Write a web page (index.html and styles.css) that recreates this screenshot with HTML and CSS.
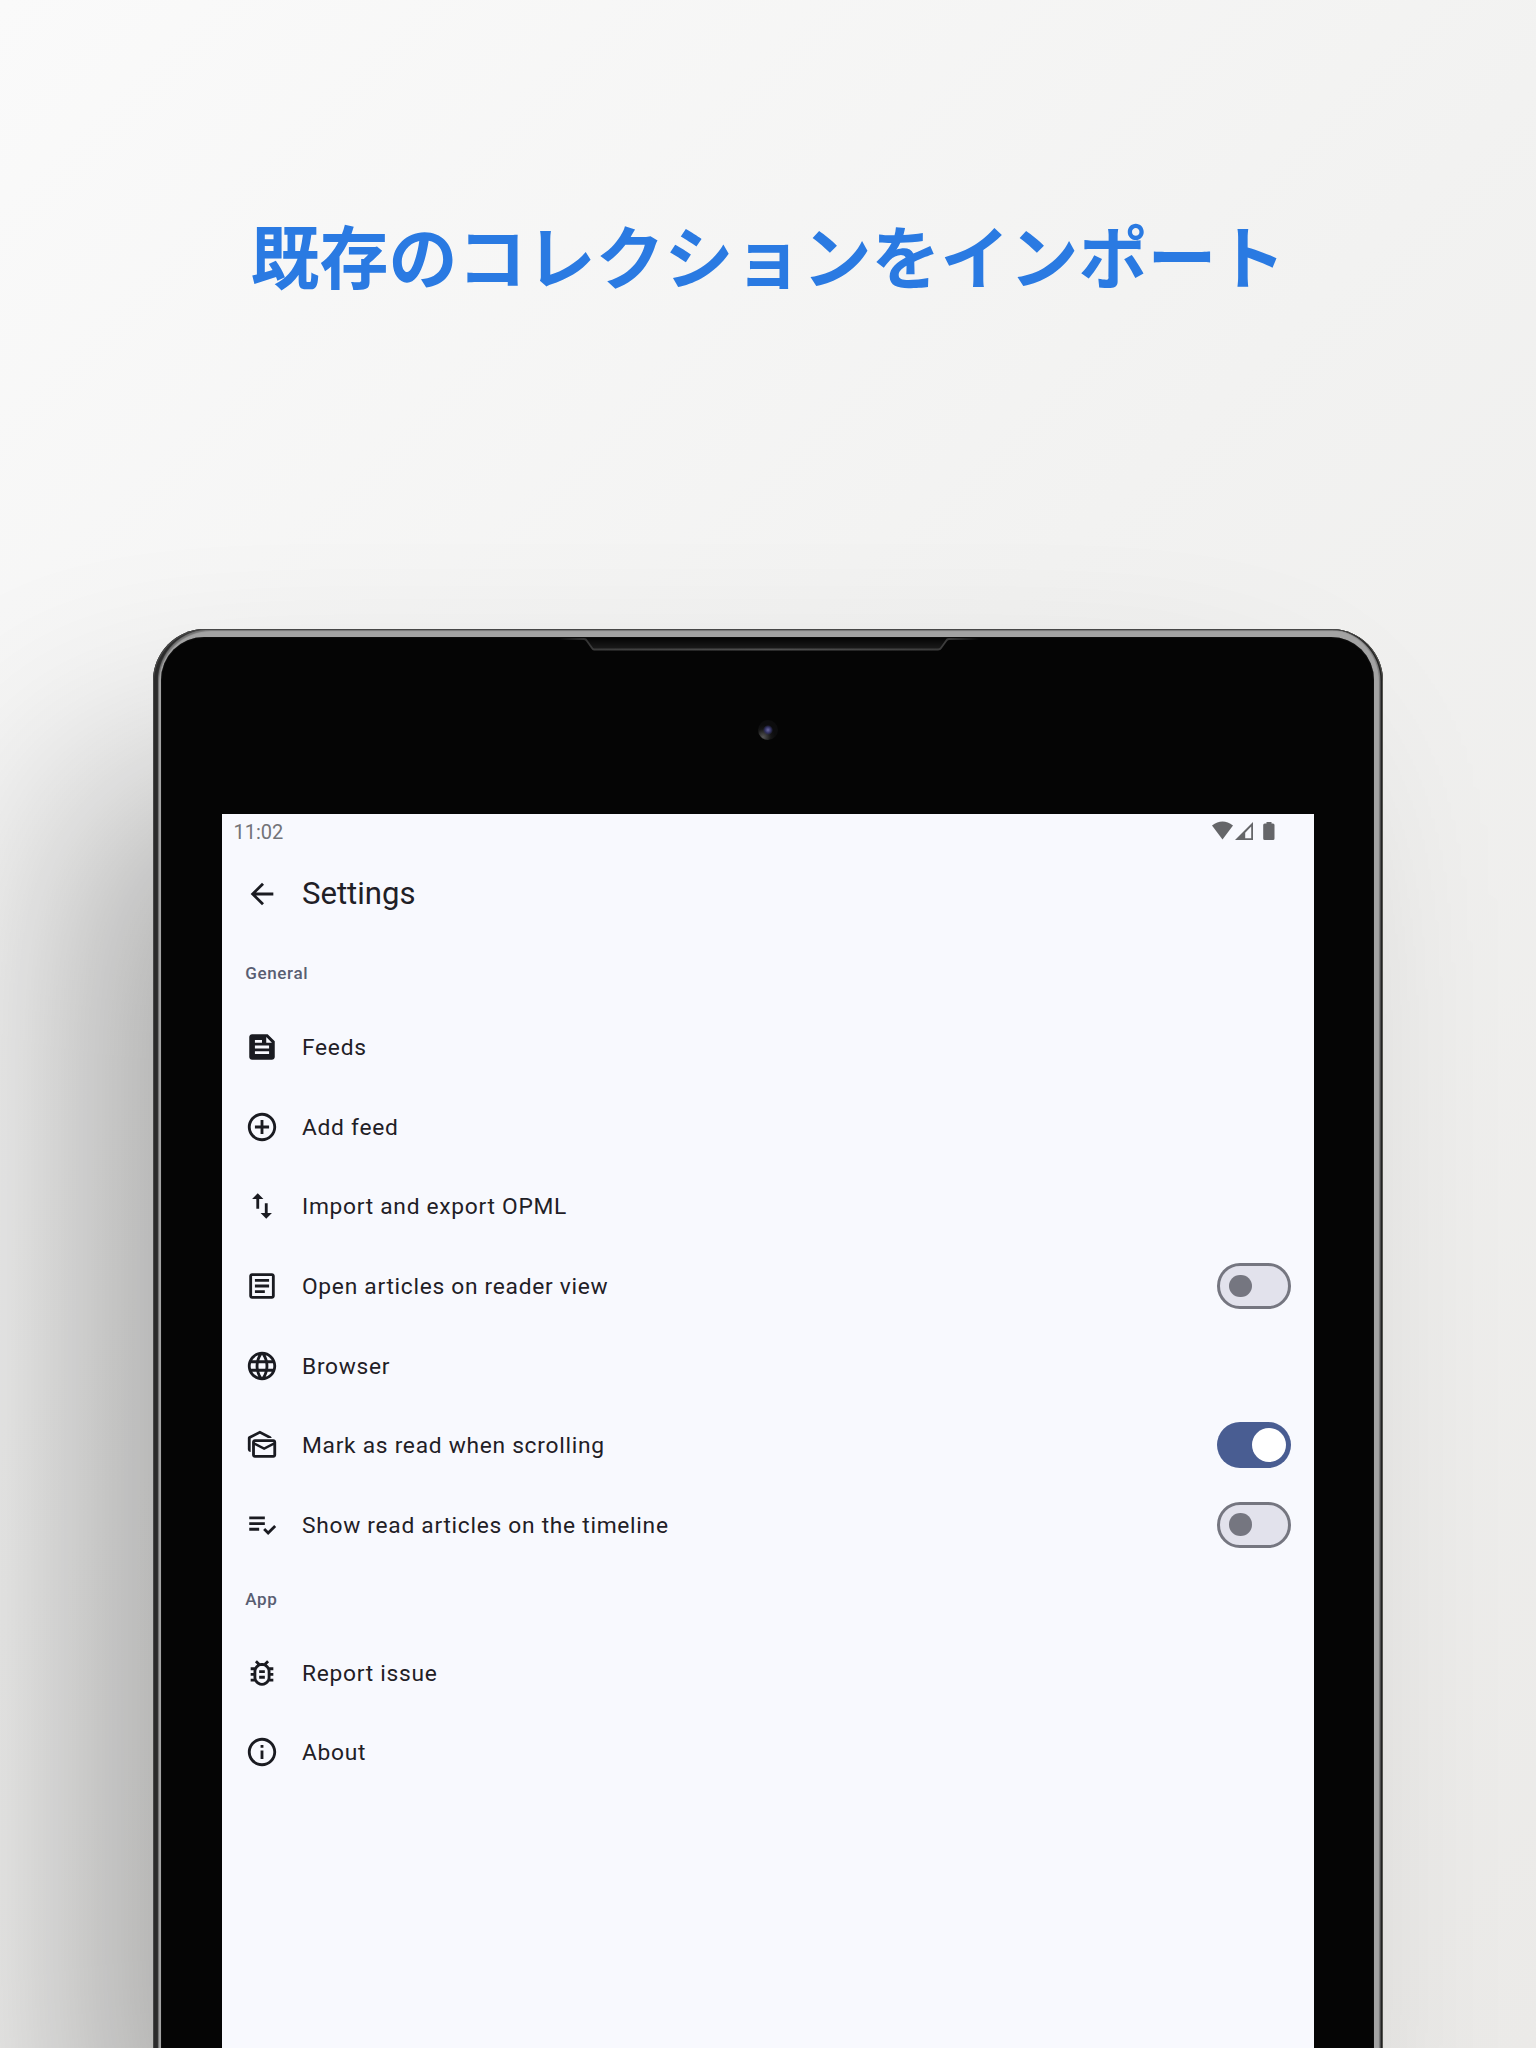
FILE: index.html
```html
<!DOCTYPE html>
<html lang="ja">
<head>
<meta charset="utf-8">
<title>Settings</title>
<link rel="stylesheet" href="styles.css">
</head>
<body>
<main class="poster">
  <h1 class="headline">既存のコレクションをインポート</h1>
  <div class="device">
    <div class="bezel">
      <svg class="speaker" viewBox="0 0 420 18"><defs><linearGradient id="lip" x1="0" x2="1" y1="0" y2="0"><stop offset="0" stop-color="#444" stop-opacity="0"/><stop offset=".08" stop-color="#3c3c3c"/><stop offset=".5" stop-color="#505050"/><stop offset=".92" stop-color="#3c3c3c"/><stop offset="1" stop-color="#444" stop-opacity="0"/></linearGradient><linearGradient id="slot" x1="0" x2="0" y1="0" y2="1"><stop offset="0" stop-color="#050505"/><stop offset="1" stop-color="#1d1d1d"/></linearGradient></defs><path d="M27 1l8 12h346l8-12z" fill="url(#slot)"/><path d="M0 2h25q2 0 3 2l5 7q1 1.500 2 1.500h344q2 0 3-1.500l5-7q1-2 3-2h30" fill="none" stroke="url(#lip)" stroke-width="1.8"/></svg>
      <div class="camera"></div>
      <section class="screen">
        <div class="status">
          <span>11:02</span>
          <svg class="status-icons" viewBox="0 0 64 20"><path d="M0 4.5Q10.500-3.500 21 4.500L10.500 18.500z"/><path d="M41 1v18H23zm-1.800 4.500l-6 6.300v5.400h6z" fill-rule="evenodd"/><path d="M54.500 1h5v1.400h1.500q1.500 0 1.500 1.500v13.600q0 1.500-1.500 1.500h-8.300q-1.500 0-1.500-1.500V3.900q0-1.500 1.500-1.500h1.800z"/></svg>
        </div>
        <header class="topbar">
          <svg class="icon" viewBox="0 0 24 24"><path d="M20 11H7.830l5.590-5.590L12 4l-8 8 8 8 1.410-1.410L7.830 13H20v-2z"/></svg>
          <h2>Settings</h2>
        </header>
        <h3 class="section">General</h3>
        <div class="row"><svg class="icon" viewBox="0 0 24 24"><path d="M16 3H5c-1.100 0-2 .9-2 2v14c0 1.100.9 2 2 2h14c1.100 0 2-.9 2-2V8l-5-5zM7 7h5v2H7V7zm10 10H7v-2h10v2zm0-4H7v-2h10v2zm-2-4V5l4 4h-4z"/></svg><span>Feeds</span></div>
        <div class="row"><svg class="icon" viewBox="0 0 24 24"><path d="M13 7h-2v4H7v2h4v4h2v-4h4v-2h-4V7zm-1-5C6.480 2 2 6.480 2 12s4.480 10 10 10 10-4.480 10-10S17.520 2 12 2zm0 18c-4.410 0-8-3.590-8-8s3.590-8 8-8 8 3.590 8 8-3.590 8-8 8z"/></svg><span>Add feed</span></div>
        <div class="row"><svg class="icon" viewBox="0 0 24 24"><path d="M9 3L5 6.990h3V14h2V6.990h3L9 3zm7 14.010V10h-2v7.010h-3L15 21l4-3.990h-3z"/></svg><span>Import and export OPML</span></div>
        <div class="row"><svg class="icon" viewBox="0 0 24 24"><path d="M19 5v14H5V5h14m0-2H5c-1.100 0-2 .9-2 2v14c0 1.100.9 2 2 2h14c1.100 0 2-.9 2-2V5c0-1.100-.9-2-2-2zM14 17H7v-2h7v2zm3-4H7v-2h10v2zm0-4H7V7h10v2z"/></svg><span>Open articles on reader view</span><i class="switch"></i></div>
        <div class="row"><svg class="icon" viewBox="0 0 24 24"><path d="M11.990 2C6.470 2 2 6.480 2 12s4.470 10 9.990 10C17.520 22 22 17.520 22 12S17.520 2 11.990 2zm6.930 6h-2.950c-.32-1.250-.78-2.450-1.380-3.560 1.840.63 3.370 1.910 4.330 3.560zM12 4.040c.83 1.200 1.480 2.530 1.910 3.960h-3.820c.43-1.430 1.080-2.760 1.910-3.960zM4.260 14C4.100 13.360 4 12.690 4 12s.1-1.360.26-2h3.380c-.08.66-.14 1.320-.14 2s.06 1.340.14 2H4.260zm.82 2h2.950c.32 1.250.78 2.450 1.380 3.560-1.840-.63-3.370-1.900-4.330-3.560zm2.950-8H5.080c.96-1.660 2.490-2.930 4.330-3.560C8.810 5.550 8.350 6.750 8.030 8zM12 19.960c-.83-1.200-1.480-2.530-1.910-3.960h3.820c-.43 1.430-1.080 2.760-1.910 3.960zM14.340 14H9.660c-.09-.66-.16-1.320-.16-2s.07-1.350.16-2h4.680c.09.65.16 1.320.16 2s-.07 1.340-.16 2zm.25 5.560c.6-1.110 1.060-2.310 1.380-3.560h2.950c-.96 1.650-2.490 2.930-4.330 3.560zM16.360 14c.08-.66.14-1.320.14-2s-.06-1.340-.14-2h3.380c.16.64.26 1.310.26 2s-.1 1.360-.26 2h-3.380z"/></svg><span>Browser</span></div>
        <div class="row"><svg class="icon" viewBox="0 0 24 24"><path d="M18.830 7h-2.600L10.500 4 4 7.400V17c-1.100 0-2-.9-2-2V7.170c0-.53.32-1.090.8-1.340L10.500 2l7.540 3.830c.43.23.73.7.79 1.170zM20 8H7c-1.100 0-2 .9-2 2v9c0 1.100.9 2 2 2h13c1.100 0 2-.9 2-2v-9c0-1.100-.9-2-2-2zm0 11H7v-6.800l6.500 3.330L20 12.200V19zm0-8.800L13.500 13.500 7 10.200V9.900h13v.3z"/></svg><span>Mark as read when scrolling</span><i class="switch on"></i></div>
        <div class="row"><svg class="icon" viewBox="0 0 24 24"><path d="M14 10H3v2h11v-2zm0-4H3v2h11V6zM3 16h7v-2H3v2zM20.590 11.930l-4.250 4.240-2.120-2.120-1.410 1.410L16.340 19 22 13.340l-1.410-1.410z"/></svg><span>Show read articles on the timeline</span><i class="switch"></i></div>
        <h3 class="section">App</h3>
        <div class="row"><svg class="icon" viewBox="0 0 24 24"><path d="M20 8h-2.810c-.45-.78-1.070-1.450-1.820-1.960L17 4.410 15.590 3l-2.170 2.170C12.960 5.060 12.490 5 12 5s-.96.06-1.410.17L8.410 3 7 4.410l1.620 1.630C7.880 6.550 7.260 7.220 6.810 8H4v2h2.090c-.05.33-.09.66-.09 1v1H4v2h2v1c0 .34.04.67.09 1H4v2h2.810c1.040 1.790 2.970 3 5.190 3s4.150-1.210 5.190-3H20v-2h-2.090c.05-.33.09-.66.09-1v-1h2v-2h-2v-1c0-.34-.04-.67-.09-1H20V8zm-4 4v3c0 .22-.03.47-.07.7l-.1.65-.37.65c-.72 1.240-2.040 2-3.460 2s-2.740-.77-3.460-2l-.37-.64-.1-.65C8.030 15.480 8 15.230 8 15v-4c0-.23.03-.48.07-.7l.1-.65.37-.65c.3-.52.72-.97 1.210-1.310l.57-.39.74-.18c.31-.08.63-.12.94-.12.32 0 .63.04.95.12l.68.16.61.42c.5.34.91.78 1.210 1.310l.38.65.1.65c.04.22.07.48.07.7v1zm-6 2h4v2h-4zm0-4h4v2h-4z"/></svg><span>Report issue</span></div>
        <div class="row"><svg class="icon" viewBox="0 0 24 24"><path d="M11 7h2v2h-2zm0 4h2v6h-2zm1-9C6.480 2 2 6.480 2 12s4.480 10 10 10 10-4.480 10-10S17.520 2 12 2zm0 18c-4.410 0-8-3.590-8-8s3.590-8 8-8 8 3.590 8 8-3.590 8-8 8z"/></svg><span>About</span></div>
      </section>
    </div>
  </div>
</main>
</body>
</html>
```

FILE: styles.css
```css
* { box-sizing: border-box; }
body { margin: 0; }
.poster {
  width: 1536px;
  height: 2048px;
  overflow: hidden;
  display: flex;
  flex-direction: column;
  align-items: center;
  background: linear-gradient(135deg, #fafafa 0%, #f2f2f1 45%, #ebeae8 100%);
}
.headline {
  height: 629px;
  flex: none;
  margin: 0;
  padding-top: 204px;
  font: 700 69px/100px "Noto Sans CJK JP", sans-serif;
  white-space: nowrap;
  color: #2a7ae2;
}
.device {
  width: 1230px;
  height: 1500px;
  flex: none;
  padding: 8px 9px 0 8px;
  border-radius: 52px 52px 0 0;
  background: #a3a3a3;
  box-shadow:
    inset 1px 1px 0 #474747,
    inset -1px 0 0 #555550,
    inset 5px 0 1px #2b2b2b,
    inset -2.500px 0 0.500px #222,
    inset 6px 2px 1px #777,
    inset -4px 0 1px #777,
    -100px 130px 230px -25px rgba(0, 0, 0, 0.310);
}
.bezel {
  position: relative;
  height: 100%;
  padding: 177px 60px 0 61px;
  border-radius: 43px 43px 0 0;
  background: #050505;
  box-shadow: inset 0 0 2px #222;
}
.speaker {
  position: absolute;
  top: 0;
  left: 398px;
  width: 420px;
  height: 18px;
}
.camera {
  position: absolute;
  top: 83px;
  left: 597px;
  width: 20px;
  height: 20px;
  border-radius: 50%;
  background:
    radial-gradient(circle at 10px 10px, #6a68a4 0, #30305e 3px, transparent 5px),
    radial-gradient(circle at 5px 17px, #555 0, #151515 8px, #0c0c0d 12px);
}
.screen {
  height: 100%;
  background: #f8f9fe;
  color: #1f2026;
  font-family: Roboto, sans-serif;
}
.status {
  height: 34px;
  padding: 1px 38px 0 11.500px;
  display: flex;
  align-items: center;
  justify-content: space-between;
  font-size: 20px;
  color: #727378;
}
.status-icons {
  width: 64px;
  height: 20px;
  margin-top: -1px;
  fill: #656669;
}
.icon {
  width: 34px;
  height: 34px;
  flex: none;
  fill: #1a1b21;
}
.topbar, .row {
  display: flex;
  align-items: center;
  gap: 23px;
  padding: 0 23px;
}
.topbar { height: 91px; }
.topbar h2 {
  margin: 0;
  font-size: 31.100px;
  font-weight: 400;
}
.section {
  height: 68.250px;
  margin: 0;
  padding: 0 23.300px;
  display: flex;
  align-items: center;
  font-size: 17.060px;
  font-weight: 500;
  letter-spacing: 0.600px;
  color: #595e72;
}
.row {
  height: 79.625px;
  font-size: 22.750px;
  letter-spacing: 0.720px;
}
.row span { padding-top: 1px; }
.switch {
  width: 74px;
  height: 45.500px;
  margin-left: auto;
  display: flex;
  align-items: center;
  padding-left: 9px;
  border: 3px solid #757680;
  border-radius: 23px;
  background: #e2e2ec;
}
.switch::before {
  content: "";
  width: 22.750px;
  height: 22.750px;
  border-radius: 50%;
  background: #757680;
}
.switch.on {
  padding-left: 34.500px;
  border: 0;
  background: #495d92;
}
.switch.on::before {
  width: 34.500px;
  height: 34.500px;
  background: #fff;
}
```
